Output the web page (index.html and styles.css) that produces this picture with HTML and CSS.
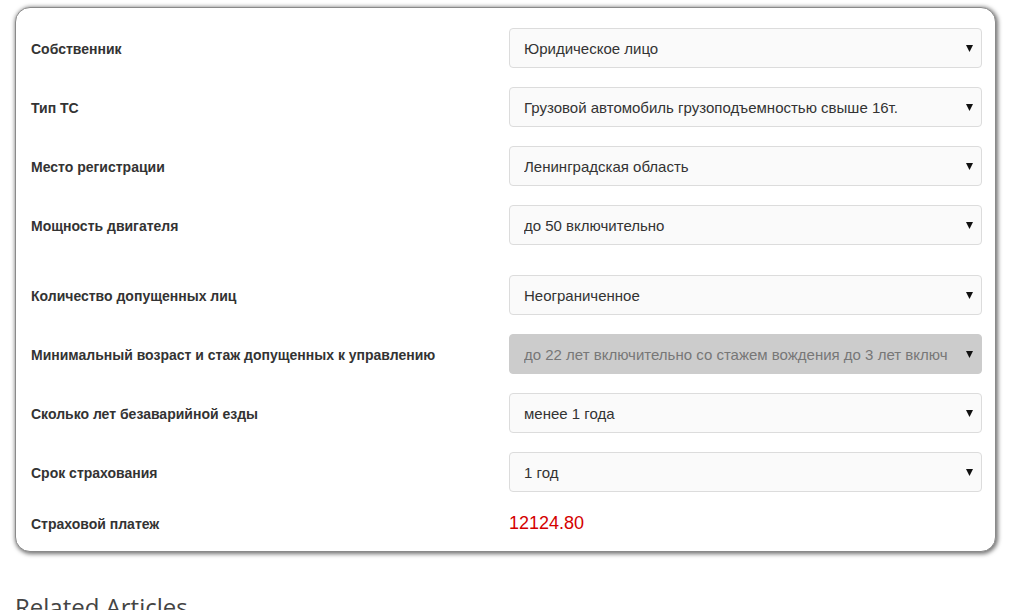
FILE: index.html
```html
<!DOCTYPE html>
<html lang="ru">
<head>
<meta charset="utf-8">
<title>Калькулятор ОСАГО</title>
<link rel="stylesheet" href="styles.css">
</head>
<body>
<div class="card">
  <div class="row">
    <div class="label">Собственник</div>
    <div class="select"><span class="val">Юридическое лицо</span><svg class="arrow" width="7" height="7" viewBox="0 0 7 7"><polygon points="0,0 7,0 3.5,7" fill="#111"/></svg></div>
  </div>
  <div class="row">
    <div class="label">Тип ТС</div>
    <div class="select"><span class="val">Грузовой автомобиль грузоподъемностью свыше 16т.</span><svg class="arrow" width="7" height="7" viewBox="0 0 7 7"><polygon points="0,0 7,0 3.5,7" fill="#111"/></svg></div>
  </div>
  <div class="row">
    <div class="label">Место регистрации</div>
    <div class="select"><span class="val">Ленинградская область</span><svg class="arrow" width="7" height="7" viewBox="0 0 7 7"><polygon points="0,0 7,0 3.5,7" fill="#111"/></svg></div>
  </div>
  <div class="row row-wide">
    <div class="label">Мощность двигателя</div>
    <div class="select"><span class="val">до 50 включительно</span><svg class="arrow" width="7" height="7" viewBox="0 0 7 7"><polygon points="0,0 7,0 3.5,7" fill="#111"/></svg></div>
  </div>
  <div class="row">
    <div class="label">Количество допущенных лиц</div>
    <div class="select"><span class="val">Неограниченное</span><svg class="arrow" width="7" height="7" viewBox="0 0 7 7"><polygon points="0,0 7,0 3.5,7" fill="#111"/></svg></div>
  </div>
  <div class="row">
    <div class="label">Минимальный возраст и стаж допущенных к управлению</div>
    <div class="select disabled"><span class="val">до 22 лет включительно со стажем вождения до 3 лет включительно</span><svg class="arrow" width="7" height="7" viewBox="0 0 7 7"><polygon points="0,0 7,0 3.5,7" fill="#111"/></svg></div>
  </div>
  <div class="row">
    <div class="label">Сколько лет безаварийной езды</div>
    <div class="select"><span class="val">менее 1 года</span><svg class="arrow" width="7" height="7" viewBox="0 0 7 7"><polygon points="0,0 7,0 3.5,7" fill="#111"/></svg></div>
  </div>
  <div class="row">
    <div class="label">Срок страхования</div>
    <div class="select"><span class="val">1 год</span><svg class="arrow" width="7" height="7" viewBox="0 0 7 7"><polygon points="0,0 7,0 3.5,7" fill="#111"/></svg></div>
  </div>
  <div class="row result">
    <div class="label">Страховой платеж</div>
    <div class="price">12124.80</div>
  </div>
</div>
<h2 class="related">Related Articles</h2>
</body>
</html>
```
FILE: styles.css
```css
html, body {
  margin: 0;
  padding: 0;
  background: #fff;
}
body {
  font-family: "Liberation Sans", Arial, sans-serif;
  color: #333;
  width: 1010px;
  height: 610px;
  overflow: hidden;
}
.card {
  box-sizing: border-box;
  width: 981px;
  margin: 7px 0 0 15px;
  padding: 20px 13px 16px 15px;
  border: 1px solid #8a8a8a;
  border-radius: 15px;
  box-shadow: 1px 1px 4px 1px rgba(0, 0, 0, 0.55);
  background: #fff;
}
.row {
  display: flex;
  align-items: center;
  height: 40px;
  margin-bottom: 19px;
}
.row-wide {
  margin-bottom: 30px;
}
.label {
  width: 478px;
  flex: none;
  padding-top: 2px;
  font-size: 14px;
  font-weight: bold;
  color: #333;
}
.select {
  box-sizing: border-box;
  width: 473px;
  height: 40px;
  display: flex;
  align-items: center;
  padding: 0 8px 0 14px;
  border: 1px solid #dcdcdc;
  border-radius: 4px;
  background: #fafafa;
  font-size: 15px;
  color: #333;
}
.val {
  flex: 1;
  white-space: nowrap;
  overflow: hidden;
  margin-right: 18px;
}
.arrow {
  flex: none;
}
.select.disabled {
  background: #cccccc;
  border-color: #cccccc;
  color: #777;
}
.result {
  height: 24px;
  margin-bottom: 0;
}
.result .label {
  padding-top: 1px;
}
.price {
  font-size: 18px;
  color: #d40000;
}
.related {
  margin: 38px 0 0 15px;
  font-family: "Open Sans", sans-serif;
  font-weight: 400;
  font-size: 24px;
  color: #444;
}
```
